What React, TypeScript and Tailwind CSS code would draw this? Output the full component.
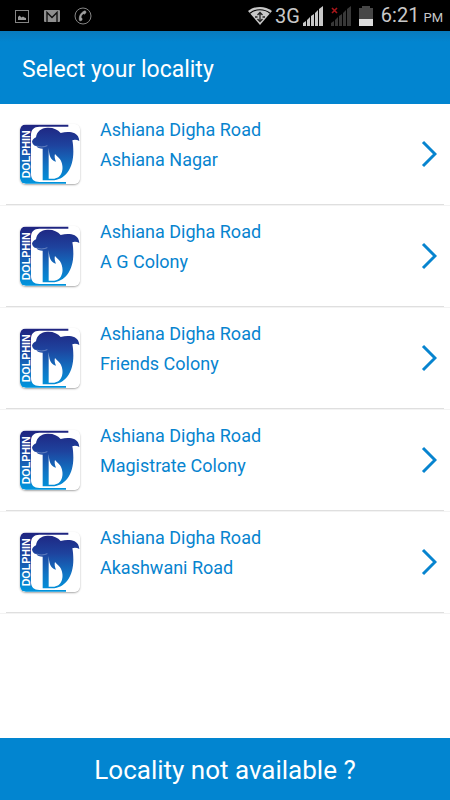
const localities = [
  { road: "Ashiana Digha Road", area: "Ashiana Nagar" },
  { road: "Ashiana Digha Road", area: "A G Colony" },
  { road: "Ashiana Digha Road", area: "Friends Colony" },
  { road: "Ashiana Digha Road", area: "Magistrate Colony" },
  { road: "Ashiana Digha Road", area: "Akashwani Road" },
];

const GalleryIcon = () => (
  <svg className="h-4 w-4" viewBox="0 0 16 16" aria-hidden="true">
    <rect x="1.500" y="2.500" width="13" height="12" fill="none" stroke="#858585" />
    <path d="M4 12V9l1.500-1.500 2 2L9 8.500l1.500 1 1.500.500v2z" fill="#9a9a9a" />
  </svg>
);

const MailIcon = () => (
  <svg className="h-4 w-[18px]" viewBox="0 0 18 16" aria-hidden="true">
    <rect x="1" y="2" width="16" height="12" rx="1" fill="#8f8f8f" />
    <path d="M4 14V4.500l5 5 5-5V14" fill="none" stroke="#111" strokeWidth="1.400" />
  </svg>
);

const CallIcon = () => (
  <svg className="h-[18px] w-[18px]" viewBox="0 0 18 18" aria-hidden="true">
    <circle cx="9" cy="9" r="8" fill="none" stroke="#858585" />
    <path
      d="M11 3.8c-4 1.3-6.2 5-5.7 9.3l.8.9 2-.9-.2-2-1-.3c.2-1.7 1-3 2.400-4.100l1 .5 1.700-1.400-.3-1.600z"
      fill="#a0a0a0"
      stroke="#a0a0a0"
      strokeWidth="0.600"
    />
  </svg>
);

const WifiIcon = () => (
  <svg className="h-5 w-6" viewBox="0 0 24 20" aria-hidden="true">
    <path d="M0 5C7-.5 17-.5 24 5L12 19z" fill="#c8c8c8" />
    <path d="M2 7.2c6-4.600 14-4.600 20 0" fill="none" stroke="#000" strokeWidth="1.200" />
    <path
      d="M12 6.500v9M9.500 9 12 6.500 14.500 9M9.500 13l2.500 2.500 2.500-2.500M7 11h2.500M14.500 11H17"
      fill="none"
      stroke="#222"
      strokeWidth="1.300"
    />
  </svg>
);

const SignalIcon = ({ color, missing = false }: { color: string; missing?: boolean }) => (
  <svg className="h-5 w-5" viewBox="0 0 20 20" aria-hidden="true">
    <path d="M0 20v-3l3-2v5zM4 20v-6l3-3v9zM8 20V10l3-2v12zM12 20V7l3-3v16zM16 20V3l4-3v20z" fill={color} />
    {missing ? <path d="m1 2 5 5M6 2 1 7" stroke="#a8161a" strokeWidth="1.600" /> : null}
  </svg>
);

const BatteryIcon = () => (
  <svg className="h-5 w-[14px]" viewBox="0 0 14 20" aria-hidden="true">
    <path d="M3 0h8v2h3v18H0V2h3z" fill="#474747" />
    <path d="M0 13h14v7H0z" fill="#dcdcdc" />
  </svg>
);

const DolphinLogo = () => (
  <svg
    className="h-[60px] w-[60px] shrink-0 rounded-md shadow-[0_1px_2px_rgba(0,0,0,0.35)]"
    viewBox="30 27 180 180"
    role="img"
    aria-label="Dolphin"
  >
    <defs>
      <linearGradient id="ocean" gradientUnits="userSpaceOnUse" x1="0" y1="30" x2="0" y2="205">
        <stop offset="0" stopColor="#1f2480" />
        <stop offset="0.35" stopColor="#1e439e" />
        <stop offset="0.7" stopColor="#1174c4" />
        <stop offset="1" stopColor="#0094dc" />
      </linearGradient>
    </defs>
    <rect x="30" y="27" width="180" height="180" rx="16" fill="#fff" />
    {/* side band with the top and bottom rules */}
    <path
      d="M46 29h129v6H88c-16 0-25 9-25 25v117c0 15 9 24 25 24h80v5H46c-10 0-16-6-16-16V45c0-10 6-16 16-16z"
      fill="url(#ocean)"
    />
    {/* head, back, tail and the bowl of the D */}
    <path
      d="M66 80c2-7 6-10 12-13 2-17 15-28 34-29 17-1 31 5 40 16 15-4 31-4 42 1 9 5 13 12 14 23-7-4-15-5-21-2 2 9 3 21 3 34 0 50-24 85-64 86H98V101c-9 0-16-2-19-8-7-1-11-5-13-13z"
      fill="url(#ocean)"
    />
    {/* counter of the D, cut by the flipper */}
    <path
      d="M116 99c1 8 1 17 4 25 3 9 9 14 18 16-4-9-5-17-3-23 4 6 10 9 15 16 14 21 9 56-17 58h-17z"
      fill="#fff"
    />
    <path d="M80 93c9 4 20 4 32-1" fill="none" stroke="#fff" strokeWidth="1" />
    <text
      transform="translate(60 190) rotate(-90)"
      fill="#fff"
      fontFamily="'Liberation Sans', Arial, sans-serif"
      fontSize="32"
      fontWeight="700"
    >
      DOLPHIN
    </text>
  </svg>
);

const ChevronIcon = () => (
  <svg className="h-7 w-4 shrink-0" viewBox="0 0 16 28" aria-hidden="true">
    <path d="m2 2 12 12L2 26" fill="none" stroke="#0784cf" strokeWidth="3" />
  </svg>
);

const StatusBar = () => (
  <div className="flex h-[31px] items-center justify-between bg-black pl-[14px] pr-[7px] text-[#c8c8c8]">
    <div className="flex items-center gap-[13px]">
      <GalleryIcon />
      <MailIcon />
      <CallIcon />
    </div>
    <div className="flex items-center">
      <WifiIcon />
      <span className="mx-[3px] text-xl leading-5">3G</span>
      <div className="flex items-center gap-2">
        <SignalIcon color="#c8c8c8" />
        <SignalIcon color="#383838" missing />
        <BatteryIcon />
      </div>
      <span className="ml-2 flex items-baseline gap-1 leading-6">
        <span className="text-xl">6:21</span>
        <span className="text-[13px]">PM</span>
      </span>
    </div>
  </div>
);

const LocalityRow = ({ road, area }: { road: string; area: string }) => (
  <li className="border-b border-[#f3f3f3]">
    <button type="button" className="flex w-full items-start pl-5 pr-[13px] text-left">
      <span className="pt-5">
        <DolphinLogo />
      </span>
      <span className="ml-5 flex h-[100px] grow flex-col pt-[11px] text-lg leading-[30px] text-[#0784cf]">
        <span>{road}</span>
        <span>{area}</span>
      </span>
      <span className="flex h-[100px] items-center">
        <ChevronIcon />
      </span>
    </button>
    <div className="mx-[6px] h-px bg-[#dfdfdf]" />
  </li>
);

export default function App() {
  return (
    <div className="flex min-h-screen flex-col bg-white font-['Roboto',sans-serif]">
      <StatusBar />
      <header className="bg-[#0285d0] bg-linear-to-b from-[#087bbd] to-[#0285d0] to-15% px-[22px] pb-[18px] pt-[22px] text-white">
        <h1 className="text-[23px] leading-[33px]">Select your locality</h1>
      </header>
      <main className="grow">
        <ul>
          {localities.map((item) => (
            <LocalityRow key={item.area} road={item.road} area={item.area} />
          ))}
        </ul>
      </main>
      <button type="button" className="w-full bg-[#0285d0] pb-[15px] pt-[17px] text-[26px] leading-[30px] text-white">
        Locality not available ?
      </button>
    </div>
  );
}
